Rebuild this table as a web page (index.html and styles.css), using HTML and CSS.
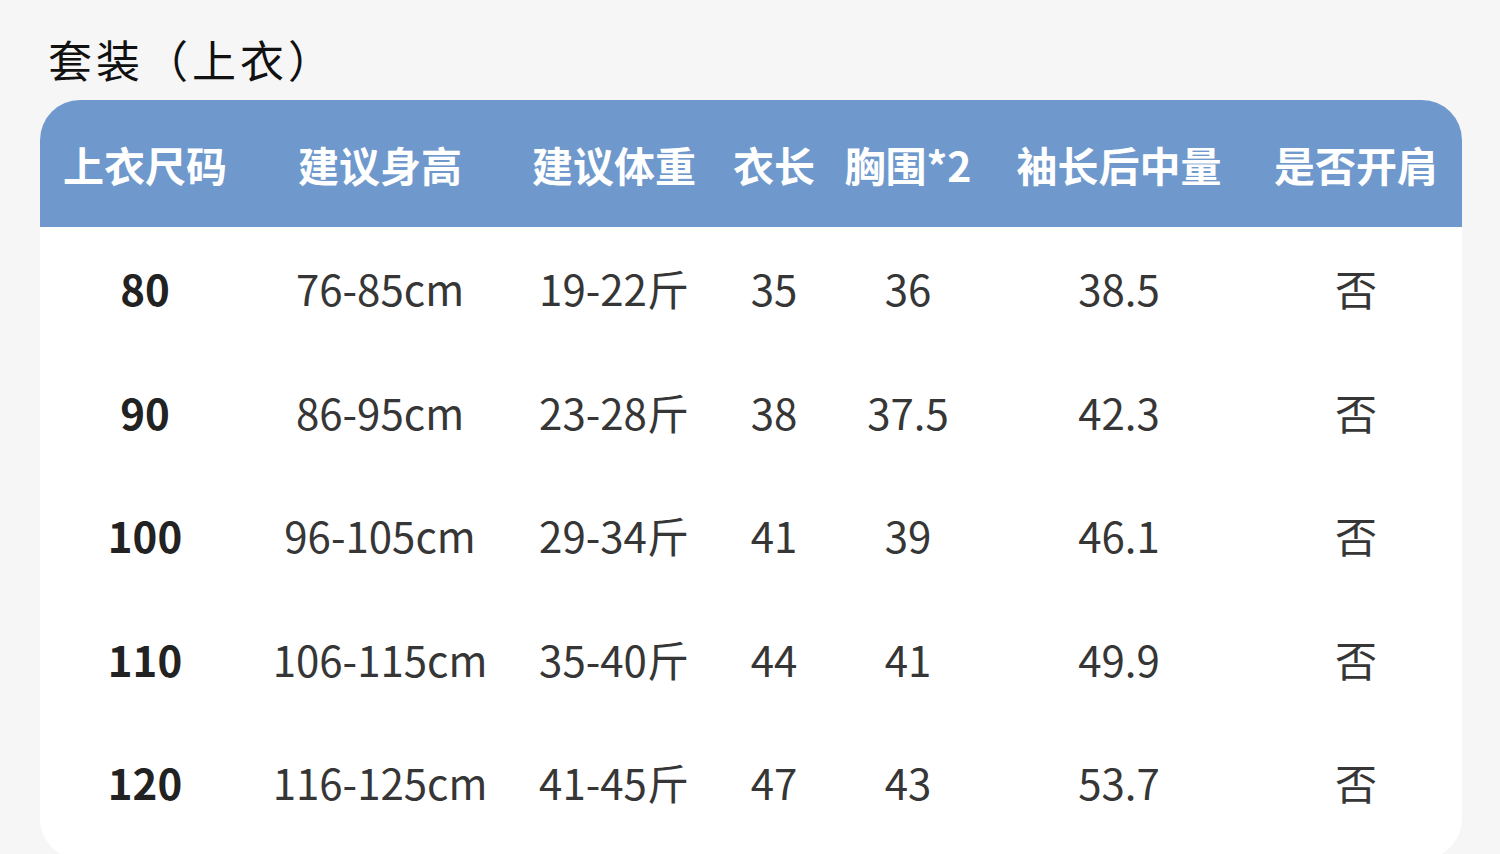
FILE: index.html
```html
<!DOCTYPE html>
<html lang="zh-CN">
<head>
<meta charset="utf-8">
<title>套装（上衣）</title>
<link rel="stylesheet" href="styles.css">
</head>
<body>
<div class="page">
  <h1 class="title">套装（上衣）</h1>
  <div class="card">
    <div class="row head">
      <div class="cell">上衣尺码</div>
      <div class="cell">建议身高</div>
      <div class="cell">建议体重</div>
      <div class="cell">衣长</div>
      <div class="cell">胸围*2</div>
      <div class="cell">袖长后中量</div>
      <div class="cell">是否开肩</div>
    </div>
    <div class="body">
      <div class="row">
        <div class="cell size">80</div><div class="cell">76-85cm</div><div class="cell">19-22斤</div><div class="cell">35</div><div class="cell">36</div><div class="cell">38.5</div><div class="cell">否</div>
      </div>
      <div class="row">
        <div class="cell size">90</div><div class="cell">86-95cm</div><div class="cell">23-28斤</div><div class="cell">38</div><div class="cell">37.5</div><div class="cell">42.3</div><div class="cell">否</div>
      </div>
      <div class="row">
        <div class="cell size">100</div><div class="cell">96-105cm</div><div class="cell">29-34斤</div><div class="cell">41</div><div class="cell">39</div><div class="cell">46.1</div><div class="cell">否</div>
      </div>
      <div class="row">
        <div class="cell size">110</div><div class="cell">106-115cm</div><div class="cell">35-40斤</div><div class="cell">44</div><div class="cell">41</div><div class="cell">49.9</div><div class="cell">否</div>
      </div>
      <div class="row">
        <div class="cell size">120</div><div class="cell">116-125cm</div><div class="cell">41-45斤</div><div class="cell">47</div><div class="cell">43</div><div class="cell">53.7</div><div class="cell">否</div>
      </div>
    </div>
  </div>
</div>
</body>
</html>
```

FILE: styles.css
```css
html, body {
  margin: 0;
  padding: 0;
  background: #f6f6f6;
}
body {
  font-family: "Noto Sans CJK SC", "Noto Sans", sans-serif;
  color: #333;
}
.page {
  padding: 0 38px 0 40px;
}
.title {
  margin: 0;
  padding: 32px 0 0 8px;
  height: 100px;
  box-sizing: border-box;
  font-size: 44px;
  line-height: 54px;
  font-weight: 400;
  letter-spacing: 4px;
  color: #111;
  text-spacing-trim: space-all;
}
.card {
  width: 1422px;
  background: #fff;
  border-radius: 40px;
  overflow: hidden;
  padding-bottom: 14px;
}
.row {
  display: grid;
  grid-template-columns: 210px 260px 208px 112px 156px 266px 208px;
  align-items: center;
}
.head {
  height: 127px;
  background: #6f99cc;
  color: #fff;
  font-weight: 700;
  font-size: 41px;
}
.cell {
  text-align: center;
  white-space: nowrap;
}
.body .row {
  height: 123.5px;
  padding-bottom: 2px;
  box-sizing: border-box;
  font-size: 42px;
  color: #363636;
}
.size {
  font-weight: 700;
  color: #222;
}
```
